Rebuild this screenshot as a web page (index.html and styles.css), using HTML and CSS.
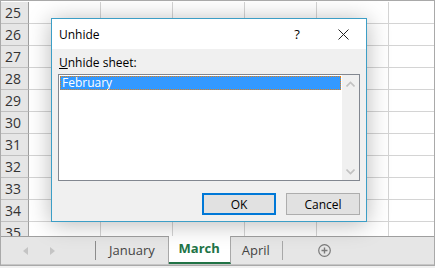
FILE: index.html
```html
<!DOCTYPE html>
<html lang="en">
<head>
    <meta charset="UTF-8">
    <title>Unhide sheet</title>
    <link rel="stylesheet" href="styles.css">
</head>
<body>
    <div class="window">
        <div class="grid">
            <div class="row"><div class="rh">25</div><div class="cell"></div><div class="cell"></div><div class="cell"></div><div class="cell"></div><div class="cell"></div><div class="cell"></div></div>
            <div class="row"><div class="rh">26</div><div class="cell"></div><div class="cell"></div><div class="cell"></div><div class="cell"></div><div class="cell"></div><div class="cell"></div></div>
            <div class="row"><div class="rh">27</div><div class="cell"></div><div class="cell"></div><div class="cell"></div><div class="cell"></div><div class="cell"></div><div class="cell"></div></div>
            <div class="row"><div class="rh">28</div><div class="cell"></div><div class="cell"></div><div class="cell"></div><div class="cell"></div><div class="cell"></div><div class="cell"></div></div>
            <div class="row"><div class="rh">29</div><div class="cell"></div><div class="cell"></div><div class="cell"></div><div class="cell"></div><div class="cell"></div><div class="cell"></div></div>
            <div class="row"><div class="rh">30</div><div class="cell"></div><div class="cell"></div><div class="cell"></div><div class="cell"></div><div class="cell"></div><div class="cell"></div></div>
            <div class="row"><div class="rh">31</div><div class="cell"></div><div class="cell"></div><div class="cell"></div><div class="cell"></div><div class="cell"></div><div class="cell"></div></div>
            <div class="row"><div class="rh">32</div><div class="cell"></div><div class="cell"></div><div class="cell"></div><div class="cell"></div><div class="cell"></div><div class="cell"></div></div>
            <div class="row"><div class="rh">33</div><div class="cell"></div><div class="cell"></div><div class="cell"></div><div class="cell"></div><div class="cell"></div><div class="cell"></div></div>
            <div class="row"><div class="rh">34</div><div class="cell"></div><div class="cell"></div><div class="cell"></div><div class="cell"></div><div class="cell"></div><div class="cell"></div></div>
            <div class="row"><div class="rh">35</div><div class="cell"></div><div class="cell"></div><div class="cell"></div><div class="cell"></div><div class="cell"></div><div class="cell"></div></div>
        </div>

        <div class="tabbar">
            <div class="nav">
                <span class="arrow left"></span>
                <span class="arrow right"></span>
            </div>
            <div class="tab">January</div>
            <div class="tab active">March</div>
            <div class="tab last">April</div>
            <div class="add">
                <svg width="13" height="13" viewBox="0 0 13 13">
                    <circle cx="6.5" cy="6.5" r="5.8" fill="none" stroke="#7a7a7a" stroke-width="1.2"/>
                    <path d="M6.5 3.5v6M3.5 6.5h6" stroke="#7a7a7a" stroke-width="1.4"/>
                </svg>
            </div>
        </div>

        <div class="dialog">
            <div class="titlebar">
                <span class="title">Unhide</span>
                <span class="help">?</span>
                <span class="close">
                    <svg width="11" height="11" viewBox="0 0 11 11">
                        <path d="M0.5 0.5l10 10M10.5 0.5l-10 10" stroke="#222" stroke-width="1"/>
                    </svg>
                </span>
            </div>
            <div class="body">
                <div class="label"><u>U</u>nhide sheet:</div>
                <div class="listbox">
                    <div class="items">
                        <div class="item selected">February</div>
                    </div>
                    <div class="scrollbar">
                        <svg width="9" height="6" viewBox="0 0 9 6"><path d="M0.5 5.5l4-4 4 4" fill="none" stroke="#c2c2c2" stroke-width="1.6"/></svg>
                        <svg width="9" height="6" viewBox="0 0 9 6"><path d="M0.5 0.5l4 4 4-4" fill="none" stroke="#c2c2c2" stroke-width="1.6"/></svg>
                    </div>
                </div>
                <div class="buttons">
                    <button class="btn default">OK</button>
                    <button class="btn">Cancel</button>
                </div>
            </div>
        </div>
    </div>
</body>
</html>
```

FILE: styles.css
```css
body {
    margin: 0;
    background: #f0f0f0;
    font-family: "Segoe UI", "Open Sans", "Noto Sans", sans-serif;
}
.window {
    position: relative;
    width: 435px;
    height: 266px;
    box-sizing: border-box;
    border: 1px solid #a9a9a9;
    background: #fff;
    overflow: hidden;
}
.grid {
    height: 235px;
    padding-top: 1px;
    box-sizing: border-box;
    overflow: hidden;
}
.row {
    display: flex;
    height: 22px;
}
.rh {
    width: 28px;
    flex: none;
    box-sizing: border-box;
    background: #e6e6e6;
    border-right: 1px solid #9e9e9e;
    border-bottom: 1px solid #c0c0c0;
    color: #333;
    font-size: 14px;
    line-height: 22px;
    padding-left: 4px;
}
.cell {
    width: 72px;
    flex: none;
    box-sizing: border-box;
    border-right: 1px solid #d4d4d4;
    border-bottom: 1px solid #d4d4d4;
}
.tabbar {
    display: flex;
    align-items: stretch;
    height: 29px;
    box-sizing: border-box;
    background: #e6e6e6;
    border-top: 1px solid #9f9f9f;
    border-bottom: 1px solid #c6c6c6;
}
.nav {
    width: 95px;
    flex: none;
    display: flex;
    align-items: center;
    gap: 22px;
    padding-left: 22px;
    box-sizing: border-box;
    border-right: 1px solid #8c8c8c;
    margin: 4px 0;
}
.arrow {
    width: 0;
    height: 0;
    border-top: 4px solid transparent;
    border-bottom: 4px solid transparent;
}
.arrow.left {
    border-right: 5px solid #c4c4c4;
}
.arrow.right {
    border-left: 5px solid #c4c4c4;
}
.tab {
    padding: 0 13px;
    font-size: 13px;
    color: #444;
    line-height: 26px;
    box-sizing: border-box;
    border-right: 1px solid #a8a8a8;
}
.tab:first-of-type {
    width: 72px;
    text-align: center;
}
.tab.active {
    background: #fff;
    color: #217346;
    font-weight: bold;
    border-left: 0;
    border-bottom: 2px solid #217346;
    line-height: 25px;
    width: 62px;
    padding: 0;
    text-align: center;
    margin-top: -1px;
}
.tab.last {
    border-right: 0;
    margin: 0;
    padding: 0 12px 0 11px;
}
.tab.last::after {
    content: "";
}
.add {
    margin-left: 0;
    border-left: 1px solid #a8a8a8;
    margin-top: 4px;
    margin-bottom: 4px;
    padding-left: 35px;
    display: flex;
    align-items: center;
}
.dialog {
    position: absolute;
    left: 50px;
    top: 17px;
    width: 316px;
    height: 204px;
    box-sizing: border-box;
    border: 1px solid #3c9ec6;
    background: #f0f0f0;
    box-shadow: 0 2px 22px rgba(0, 0, 0, 0.28);
    font-size: 12px;
    color: #000;
}
.titlebar {
    display: flex;
    align-items: center;
    height: 30px;
    background: #fff;
    padding-left: 7px;
}
.title {
    flex: 1;
}
.help {
    width: 46px;
    text-align: center;
    font-size: 13px;
}
.close {
    width: 46px;
    display: flex;
    justify-content: center;
}
.body {
    padding: 6px 6px 7px 6px;
}
.label {
    padding-left: 1px;
    line-height: 16px;
    margin-bottom: 3px;
}
.listbox {
    display: flex;
    height: 107px;
    box-sizing: border-box;
    border: 1px solid #828790;
    background: #fff;
}
.items {
    flex: 1;
    padding: 1px;
}
.item {
    height: 14px;
    line-height: 13px;
    padding-left: 2px;
    box-sizing: border-box;
}
.item.selected {
    background: #3399ff;
    color: #fff;
    outline: 1px dotted #e37f14;
    outline-offset: -1px;
}
.scrollbar {
    width: 17px;
    background: #f0f0f0;
    display: flex;
    flex-direction: column;
    justify-content: space-between;
    align-items: center;
    padding: 6px 0 5px;
    box-sizing: border-box;
}
.buttons {
    display: flex;
    justify-content: flex-end;
    gap: 10px;
    margin-top: 12px;
}
.btn {
    width: 74px;
    height: 22px;
    box-sizing: border-box;
    background: #e1e1e1;
    border: 1px solid #adadad;
    font-family: inherit;
    font-size: 12px;
    color: #000;
    padding: 0;
}
.btn.default {
    border: 2px solid #0078d7;
    width: 74px;
}
```
